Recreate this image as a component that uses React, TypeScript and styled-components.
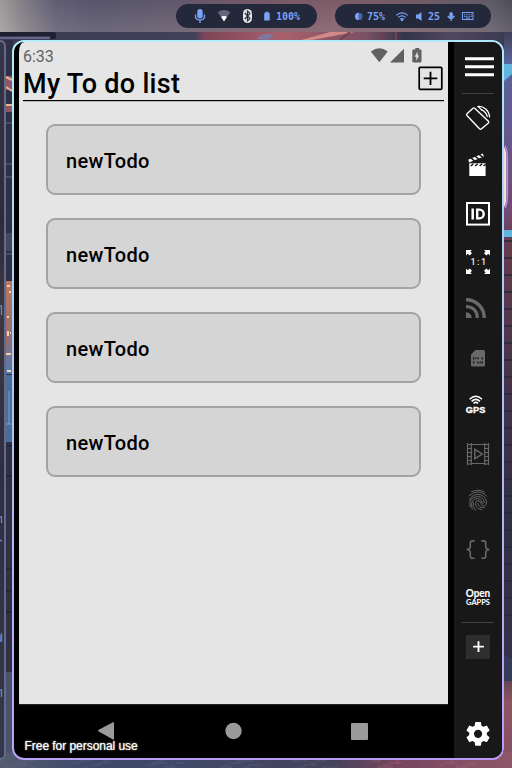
import React from "react";
import styled, { createGlobalStyle } from "styled-components";

const GlobalStyle = createGlobalStyle`
  * { box-sizing: border-box; }
  html, body { margin: 0; padding: 0; overflow: hidden; }
`;

const Desktop = styled.div`
  position: relative;
  display: flex;
  flex-direction: column;
  width: 512px;
  height: 768px;
  overflow: hidden;
  background: #35364c;
  font-family: Roboto, "Liberation Sans", sans-serif;
`;

const WallpaperArt = styled.svg`
  position: absolute;
  inset: 0;
`;

const TopBar = styled.header`
  position: relative;
  display: flex;
  justify-content: flex-end;
  gap: 18px;
  height: 32px;
  padding: 4px 21px 4px 0;
  background: linear-gradient(90deg, #aaa5a3 0, #8d898e 20px, #67647a 55px, #5c5a70 90px, #655d70 170px, #795c6b 240px, #86606c 330px, #77606a 420px, #64606b 490px, #53515f 512px);
  &::after {
    content: "";
    position: absolute;
    inset: 0;
    background: linear-gradient(180deg, rgba(20, 20, 40, 0.08), rgba(190, 180, 180, 0.16));
  }
`;

const Pill = styled.div<{ $width: number }>`
  position: relative;
  z-index: 1;
  display: flex;
  width: ${(p) => p.$width}px;
  height: 24px;
  border-radius: 12px;
  background: #24283b;
`;

const PillArt = styled.svg`
  display: block;
  text {
    font-family: "DejaVu Sans Mono", monospace;
    font-size: 10px;
    font-weight: 700;
    fill: #7aa2f7;
  }
`;

const Workspace = styled.main`
  position: relative;
  display: flex;
  gap: 6px;
  height: 736px;
  padding: 8px 8px 8px 0;
`;

const NeighbourWindow = styled.div`
  width: 6px;
  height: 720px;
  border: 2px solid #626b8c;
  border-left: 0;
  border-radius: 0 10px 10px 0;
  background: linear-gradient(#36364a, #2b2b3c 25%, #403841 38%, #2d2e41 60%, #36374a);
  overflow: hidden;
`;

const NeighbourText = styled.svg`
  display: block;
`;

const WindowFrame = styled.section`
  width: 492px;
  height: 720px;
  padding: 2px;
  border-radius: 12px;
  background: linear-gradient(172deg, #b4f0fb 0%, #a9d4f5 30%, #b2b9f5 62%, #bb9af7 100%);
`;

const WindowBody = styled.div`
  position: relative;
  display: flex;
  width: 488px;
  height: 716px;
  padding-left: 5px;
  border-radius: 10px;
  overflow: hidden;
  background: #000;
`;

const Phone = styled.div`
  display: flex;
  flex-direction: column;
  width: 429px;
  margin-right: 6px;
`;

const Screen = styled.div`
  display: flex;
  flex-direction: column;
  height: 662px;
  margin-left: -5px;
  border-left: 5px solid #000;
  border-top-left-radius: 10px;
  background: #e5e5e5;
`;

const StatusBar = styled.div`
  display: flex;
  justify-content: space-between;
  height: 24px;
  padding: 5px 25px 0 4px;
  color: #616161;
  font-size: 16px;
  line-height: 19px;
`;

const Header = styled.div`
  display: flex;
  justify-content: space-between;
  height: 35px;
  margin: 0 4px;
  border-bottom: 1px solid #000;
  box-shadow: 0 1px 0 #b5b5b5;
`;

const Title = styled.h1`
  margin: 0;
  color: #000;
  font-size: 27px;
  font-weight: 500;
  letter-spacing: 0.29px;
  line-height: 36px;
  white-space: nowrap;
`;

const AddButton = styled.button`
  width: 26px;
  height: 26px;
  padding: 0;
  border: 0;
  background: none;
  svg { display: block; }
`;

const TodoList = styled.ul`
  display: flex;
  flex-direction: column;
  gap: 23px;
  margin: 0;
  padding: 23px 27px 0;
  list-style: none;
`;

const TodoCard = styled.li`
  display: flex;
  align-items: center;
  height: 71px;
  padding: 2px 0 0 18px;
  border: 2px solid #a3a3a3;
  border-radius: 9px;
  background: #d5d5d5;
  color: #000;
  font-size: 20px;
  font-weight: 500;
  letter-spacing: 0.32px;
`;

const NavBar = styled.div`
  height: 54px;
  border-top: 1px solid #222;
  svg { display: block; }
`;

const Watermark = styled.div`
  position: absolute;
  left: 10.5px;
  bottom: 5px;
  color: #fff;
  font-family: "Liberation Sans", sans-serif;
  font-size: 12px;
  letter-spacing: -0.04px;
  line-height: 14px;
  text-shadow: 0 0 2px rgba(255, 255, 255, 0.55), 0 0 1px rgba(255, 255, 255, 0.5);
  white-space: nowrap;
`;

const Sidebar = styled.aside`
  display: flex;
  flex-direction: column;
  width: 48px;
  height: 716px;
  background: #181818;
`;

const Divider = styled.div`
  height: 1px;
  margin: 0 8px;
  background: #424242;
`;

const Spacer = styled.div`
  flex: 1;
`;

const ToolButton = styled.button<{ $color?: string; $height?: number }>`
  width: 48px;
  height: ${(p) => p.$height ?? 48}px;
  padding: 0;
  border: 0;
  background: none;
  color: ${(p) => p.$color ?? "#fff"};
  svg { display: block; }
`;

const Glyph = ({ children, h = 48 }: { children: React.ReactNode; h?: number }) => (
  <svg width="48" height={h} viewBox={`0 0 48 ${h}`} fill="none" stroke="none">
    {children}
  </svg>
);

const DIM = "#696969";

const tools: { name: string; color?: string; art: React.ReactNode }[] = [
  {
    name: "Rotate",
    art: (
      <g stroke="currentColor" strokeWidth="1.4" fill="none" strokeLinejoin="round">
        <path d="M13 19.8 19 14.3Q20 13.4 21 14.4L34.4 27.2Q35.2 28.1 34.4 29L27.3 35Q26.4 35.7 25.5 34.8L12.9 21.5Q12.1 20.6 13 19.8Z" />
        <path d="M23.3 12.6C29.5 11.6 35.3 16.5 35.6 23.4M27.2 15.6C30.2 16.8 32.6 19.6 33.4 22.9" strokeWidth="1.3" />
        <path d="M24.2 12.6 28.4 16.6" strokeWidth="1.3" />
      </g>
    ),
  },
  {
    name: "Record",
    art: (
      <g>
        <path d="M15.3 21.2H31.6V34H15.3Z" fill="currentColor" />
        <path d="M14.2 17.8 28.8 11.6 29.8 14.4 15.2 20.6Z" fill="currentColor" />
        <path d="M17.2 16.2 20.5 18.9M21.3 14.4 24.8 17M25.4 12.6 28.7 15.2" stroke="#181818" strokeWidth="1.5" />
        <path d="M16.8 24 19.4 21.8M21.2 24 23.8 21.8M25.6 24 28.2 21.8M29.6 24 31.6 22.3" stroke="#181818" strokeWidth="1.5" />
      </g>
    ),
  },
  {
    name: "Identifiers",
    art: (
      <g>
        <rect x="13" y="13" width="22" height="21.6" stroke="currentColor" strokeWidth="2" />
        <path d="M18.7 18.4V29.6" stroke="currentColor" strokeWidth="2.5" />
        <path d="M23.2 19.6H25.2C31.2 19.6 31.2 28.4 25.2 28.4H23.2Z" stroke="currentColor" strokeWidth="2.4" />
      </g>
    ),
  },
  {
    name: "Pixel perfect",
    art: (
      <g fill="currentColor">
        <path d="M12 12H18L16.4 13.6 18 15.3 15.7 17.6 13.7 15.8 12 17.5Z" />
        <path d="M36 12H30L31.6 13.6 30 15.3 32.3 17.6 34.3 15.8 36 17.5Z" />
        <path d="M12 36H18L16.4 34.4 18 32.7 15.7 30.4 13.7 32.2 12 30.5Z" />
        <path d="M36 36H30L31.6 34.4 30 32.7 32.3 30.4 34.3 32.2 36 30.5Z" />
        <text x="24.3" y="27" fontSize="9" fontFamily="Roboto" fontWeight="500" textAnchor="middle" textLength="15.5" opacity=".9">1 : 1</text>
      </g>
    ),
  },
  {
    name: "Network",
    color: DIM,
    art: (
      <g>
        <path d="M12 13.7C22.5 13.7 30.2 21.5 30.2 32" stroke="currentColor" strokeWidth="3.5" />
        <path d="M12 20.6C19 20.6 23.3 25 23.3 32" stroke="currentColor" strokeWidth="3.3" />
        <path d="M12 26.3Q17.5 27 17.8 32H12Z" fill="currentColor" />
      </g>
    ),
  },
  {
    name: "SIM",
    color: DIM,
    art: (
      <g>
        <path d="M21.5 16H29.5Q31 16 31 17.5V31Q31 32.5 29.5 32.5H18.5Q17 32.5 17 31V20.5Z" fill="currentColor" />
        <path d="M19.7 23.3V25.5M24 23.3V25.2M28.3 23.3V25.5M19.7 27.3V29.6M24 27.5V29.6M28.3 27.3V29.6M21 24.2H22.5M25.5 28.5H27" stroke="#181818" strokeWidth="1.3" />
      </g>
    ),
  },
  {
    name: "GPS",
    art: (
      <g>
        <path d="M15.6 17.2Q21.8 11.4 28 17.2M17.6 19.4Q21.8 15.4 26 19.4M19.5 21.4Q21.8 19.4 24.1 21.4" stroke="currentColor" strokeWidth="1.5" />
        <text x="11.8" y="31" fontSize="9.6" fontFamily="Liberation Sans" fontWeight="700" fill="currentColor" stroke="currentColor" strokeWidth=".35" textLength="19.5" lengthAdjust="spacingAndGlyphs">GPS</text>
      </g>
    ),
  },
  {
    name: "Capture",
    color: DIM,
    art: (
      <g stroke="currentColor" strokeWidth="1.2">
        <path d="M13.5 13V35M17.3 13V35M30.7 13V35M34.5 13V35M17.3 14.5H30.7M17.3 33.5H30.7" />
        <path d="M13 14.5H17M13 18.5H17M13 22.5H17M13 26.5H17M13 30.5H17M13 34H17M31 14.5H35M31 18.5H35M31 22.5H35M31 26.5H35M31 30.5H35M31 34H35" />
        <path d="M20.8 19.3V28.7L28.3 24Z" strokeWidth="1.4" />
      </g>
    ),
  },
  {
    name: "Biometrics",
    color: DIM,
    art: (
      <g stroke="currentColor" strokeWidth=".95" strokeLinecap="round">
        <g transform="translate(0 1)">
          <path d="M17.5 12.8Q24 9.5 30.2 12.8M15.2 16.7Q19.5 12.9 24 13 29.5 13.2 32.7 17.2M15.2 21.2Q18.5 15.2 24 15.4 31 15.7 32.5 22.9 32.6 26.3 30.6 27 28 27.5 27.3 24.7 26.5 21.7 24 21.8 21.2 22 21.5 25 22.3 29.8 27.3 30.6" />
          <path d="M16 27.7Q14.3 17.8 23.8 17.6 29.2 17.6 30.3 23.6M18.2 30.2Q16 22.6 20.4 20.3 27 18 28.6 24.3M21.3 31.3Q18.3 27.5 19.2 23.8M24 24.4Q24.8 29.2 30.2 28.8" />
        </g>
      </g>
    ),
  },
  {
    name: "Developer",
    color: DIM,
    art: (
      <g stroke="currentColor" strokeWidth="1.6">
        <path d="M20.6 14.9H18.5Q16.3 14.9 16.3 17V20.5Q16.3 23.2 12.6 23.5 16.3 23.8 16.3 26.6V30.2Q16.3 32.2 18.5 32.2H20.6" />
        <path d="M27.4 14.9H29.5Q31.7 14.9 31.7 17V20.5Q31.7 23.2 35.4 23.5 31.7 23.8 31.7 26.6V30.2Q31.7 32.2 29.5 32.2H27.4" />
      </g>
    ),
  },
  {
    name: "Open GApps",
    art: (
      <g fill="currentColor" stroke="currentColor" fontFamily="Lato">
        <text x="11.7" y="22.6" fontSize="10.4" fontWeight="700" strokeWidth=".15" textLength="24.5" lengthAdjust="spacingAndGlyphs">Open</text>
        <text x="12" y="31.4" fontSize="7.2" fontWeight="700" strokeWidth=".05" textLength="24" lengthAdjust="spacingAndGlyphs">GAPPS</text>
      </g>
    ),
  },
];

const Wallpaper = () => (
  <WallpaperArt width="512" height="768" viewBox="0 0 512 768">
    <defs>
      <linearGradient id="sky" x1="0" x2="1" y1="0" y2="0">
        <stop offset="0" stopColor="#393a50" />
        <stop offset=".38" stopColor="#42415a" />
        <stop offset=".4" stopColor="#7e4558" />
        <stop offset=".55" stopColor="#a8616b" />
        <stop offset=".72" stopColor="#784f62" />
        <stop offset=".79" stopColor="#343449" />
        <stop offset=".88" stopColor="#514760" />
        <stop offset="1" stopColor="#393850" />
      </linearGradient>
      <linearGradient id="ground" x1="0" x2="1" y1="0" y2="0">
        <stop offset="0" stopColor="#555c72" />
        <stop offset=".18" stopColor="#3e4868" />
        <stop offset=".4" stopColor="#414967" />
        <stop offset=".65" stopColor="#45435b" />
        <stop offset=".77" stopColor="#75455e" />
        <stop offset="1" stopColor="#8e5869" />
      </linearGradient>
      <linearGradient id="right" x1="0" x2="0" y1="0" y2="1">
        <stop offset="0" stopColor="#403e56" />
        <stop offset=".04" stopColor="#57639a" />
        <stop offset=".12" stopColor="#645b91" />
        <stop offset=".25" stopColor="#704970" />
        <stop offset=".29" stopColor="#653b4d" />
        <stop offset=".5" stopColor="#41334a" />
        <stop offset=".66" stopColor="#302f43" />
        <stop offset=".85" stopColor="#353247" />
        <stop offset=".91" stopColor="#8d5563" />
        <stop offset="1" stopColor="#805063" />
      </linearGradient>
      <linearGradient id="sign" x1="0" x2="0" y1="0" y2="1">
        <stop offset="0" stopColor="#b87961" />
        <stop offset=".6" stopColor="#966e73" />
        <stop offset="1" stopColor="#547baf" />
      </linearGradient>
    </defs>
    <rect y="32" width="512" height="20" fill="url(#sky)" />
    <path d="M0 32H55V36H0ZM52 33H56V39H48Z" fill="#202033" />
    <path d="M0 37H50V39H0Z" fill="#66678e" />
    <path d="M301 40 330 32H355L312 40Z" fill="#d08a87" />
    <path d="M256 39Q264 31 274 35L268 40Z" fill="#81789f" />
    <path d="M340 40 350 32 M382 33V40 M396 32V40" stroke="#714054" strokeWidth="2" />
    <rect x="504" y="32" width="8" height="736" fill="url(#right)" />
    <path d="M504 64H512V74L504 81ZM504 230H512V237H504Z" fill="#62b5df" />
    <path d="M504 147Q506.4 150 506.4 158V196Q506.4 204 504 207Z" fill="#f4dfd8" />
    <path d="M505 146Q507.4 150 507.4 160V194Q507.4 204 505 208" stroke="#bd83e5" strokeWidth="1.5" fill="none" />
    {Array.from({ length: 23 }, (_, i) => (
      <path key={i} d={`M504 ${241 + i * 17}H512`} stroke="#29283a" strokeWidth="1.5" />
    ))}
    <path d="M504 655 512 658V681H504Z" fill="#343c58" />
    <rect x="4" y="40" width="9" height="728" fill="#303044" />
    <path d="M6 76H13V90H6ZM6 104H13V112H6Z" fill="#8c5768" />
    <path d="M6 77 12 80M6 87 12 91M6 105H12" stroke="#ebb58b" strokeWidth="2" />
    <path d="M6 123H12M6 164H12M6 177H12M6 254H12" stroke="#484c66" strokeWidth="2" />
    <path d="M6 233H12V251H6Z" fill="#45475c" />
    <rect x="6" y="281" width="7" height="93" fill="url(#sign)" />
    <path d="M7 286H10M9 292H11M7 317H9M8 331V336M10 333H11M6 354H11M7 371H11" stroke="#f4d3ab" strokeWidth="2" />
    <path d="M6 375H13V442H6Z" fill="#4b6d98" />
    <path d="M9 391V424M6 424H12" stroke="#79a2cb" />
    <path d="M6 446H12M6 476H12M6 569H12M6 591H12M6 612H12" stroke="#20263c" strokeWidth="2" />
    <rect x="6" y="672" width="7" height="96" fill="#495269" />
    <rect y="752" width="512" height="16" fill="url(#ground)" />
    {Array.from({ length: 42 }, (_, i) => (
      <path
        key={i}
        d={`M${(i * 73) % 505} ${761 + (i % 4) * 2}h${4 + (i % 5) * 3}`}
        stroke={(i * 73) % 505 > 370 ? "#aa6977" : "#626887"}
        opacity=".5"
      />
    ))}
  </WallpaperArt>
);

const todos = ["newTodo", "newTodo", "newTodo", "newTodo"];

export default function App() {
  return (
    <>
      <GlobalStyle />
      <Desktop>
        <Wallpaper />
        <TopBar>
          <Pill $width={141}>
            <PillArt width="141" height="24" fill="none">
              <rect x="21.3" y="5" width="5.4" height="9.5" rx="2.7" fill="#7aa2f7" />
              <path d="M19.5 10.5V12Q19.5 16 24 16T28.5 12V10.5M24 16V19" stroke="#7aa2f7" strokeWidth="1.3" />
              <path d="M41.7 8.3Q48 3.8 54.3 8.3L48 17.3Z" fill="#62677a" />
              <path d="M45 12.7Q48 11.3 51 12.7L48 17.5Z" fill="#fff" />
              <rect x="67" y="5" width="9" height="14" rx="4.5" fill="#e2e3e6" />
              <path d="M68.8 9 74 14.5 71.5 17V7L74 9.5 68.8 15" stroke="#24283b" strokeWidth="1.1" />
              <path d="M88.2 9.3Q88.2 8.8 88.8 8.8H89.5V7.8H92.3V8.8H93Q93.7 8.8 93.7 9.3V16.5H88.2Z" fill="#7aa2f7" />
              <text x="100" y="16">100%</text>
            </PillArt>
          </Pill>
          <Pill $width={156}>
            <PillArt width="156" height="24" fill="none">
              <circle cx="24" cy="12.4" r="3.6" fill="#4a629f" />
              <path d="M23.7 8.7A3.7 3.7 0 0 0 23.7 16.1Z" fill="#7aa2f7" />
              <text x="32" y="16">75%</text>
              <path d="M61.2 11.4Q67 6.3 72.8 11.4M63.2 13.4Q67 10.4 70.8 13.4M65 15.2Q67 13.8 69 15.2" stroke="#7aa2f7" strokeWidth="1.2" />
              <circle cx="67" cy="16" r="1.2" fill="#7aa2f7" />
              <path d="M81 10.5H83.2L86.5 8V17L83.2 14.5H81Z" fill="#7aa2f7" />
              <text x="93" y="16">25</text>
              <rect x="114.4" y="8" width="3.4" height="6" rx="1.7" fill="#7aa2f7" />
              <path d="M113.2 11.7V12.5Q116.1 16.5 119 12.5V11.7M116.1 14V17" stroke="#7aa2f7" strokeWidth="1.4" />
              <rect x="127.5" y="8.5" width="10.5" height="7" stroke="#7aa2f7" />
              <path d="M129 10.7H137M129 12.4H137" stroke="#7aa2f7" strokeDasharray="1 .8" />
              <path d="M130.5 14.1H135" stroke="#7aa2f7" />
            </PillArt>
          </Pill>
        </TopBar>
        <Workspace>
          <NeighbourWindow>
            <NeighbourText width="4" height="716">
              <path d="M0 264H1.5V273M0 475H1.5V481M0 498.5H2M0 593V599H1.5V591M0 648H1.5V655" stroke="#6286ca" strokeWidth="1.3" fill="none" />
            </NeighbourText>
          </NeighbourWindow>
          <WindowFrame>
            <WindowBody>
              <Phone>
                <Screen>
                  <StatusBar>
                    <span>6:33</span>
                    <svg width="53" height="19" viewBox="0 0 53 19" fill="#616161">
                      <path d="M.8 4.6Q9.3-2.2 17.8 4.6L9.3 15.2Z" />
                      <path d="M20 15.5 34 1.7V15.5Z" />
                      <path d="M43.2 2.5H45.3V1H49.3V2.5H50.2Q51.5 2.5 51.5 3.8V14.3Q51.5 15.6 50.2 15.6H43.7Q42.3 15.6 42.3 14.3V3.8Q42.3 2.5 43.2 2.5Z" />
                      <path d="M47.6 4.6 44.6 9.8H46.3V13.5L49.2 8.4H47.6Z" fill="#e5e5e5" />
                    </svg>
                  </StatusBar>
                  <Header>
                    <Title>My To do list</Title>
                    <AddButton aria-label="Add todo">
                      <svg width="26" height="26" viewBox="0 0 26 26" fill="none" stroke="#000">
                        <rect x="1.2" y="1.3" width="22.6" height="22" rx="1" strokeWidth="1.7" />
                        <path d="M12.5 5.7V19M5.7 12.4H19.3" strokeWidth="1.8" />
                      </svg>
                    </AddButton>
                  </Header>
                  <TodoList>
                    {todos.map((todo, i) => (
                      <TodoCard key={i}>{todo}</TodoCard>
                    ))}
                  </TodoList>
                </Screen>
                <NavBar>
                  <svg width="429" height="53" viewBox="0 0 429 53" fill="#9a9a9a">
                    <path d="M79.3 26.2Q78.3 25.7 79.3 25.1L94 17.2Q95 16.8 95 18V34Q95 35 94 34.5Z" />
                    <circle cx="214.5" cy="26" r="8.2" />
                    <rect x="332" y="18" width="17" height="17" rx="1" />
                  </svg>
                </NavBar>
              </Phone>
              <Sidebar>
                <ToolButton $height={51} aria-label="Menu">
                  <Glyph h={51}>
                    <path d="M11 16.8H40M11 24.8H40M11 32.8H40" stroke="#fff" strokeWidth="3.1" />
                  </Glyph>
                </ToolButton>
                <Divider />
                {tools.map((tool) => (
                  <ToolButton key={tool.name} $color={tool.color} aria-label={tool.name}>
                    <Glyph>{tool.art}</Glyph>
                  </ToolButton>
                ))}
                <Divider />
                <ToolButton aria-label="More">
                  <Glyph>
                    <rect x="12" y="12" width="24" height="24" fill="#2e2e2e" />
                    <path d="M24.5 18.3V29M19.1 23.6H29.9" stroke="#fff" strokeWidth="1.9" />
                  </Glyph>
                </ToolButton>
                <Spacer />
                <ToolButton aria-label="Settings">
                  <Glyph>
                    <g transform="translate(9.9 9.7) scale(1.18)">
                      <path
                        fill="#fff"
                        d="M19.43 12.98c.04-.32.07-.64.07-.98s-.03-.66-.07-.98l2.11-1.65c.19-.15.24-.42.12-.64l-2-3.46c-.12-.22-.39-.3-.61-.22l-2.49 1c-.52-.4-1.08-.73-1.69-.98l-.38-2.65C14.46 2.18 14.25 2 14 2h-4c-.25 0-.46.18-.49.42l-.38 2.65c-.61.25-1.17.59-1.69.98l-2.49-1c-.23-.09-.49 0-.61.22l-2 3.46c-.13.22-.07.49.12.64l2.11 1.65c-.04.32-.07.65-.07.98s.03.66.07.98l-2.11 1.65c-.19.15-.24.42-.12.64l2 3.46c.12.22.39.3.61.22l2.49-1c.52.4 1.08.73 1.69.98l.38 2.65c.03.24.24.42.49.42h4c.25 0 .46-.18.49-.42l.38-2.65c.61-.25 1.17-.59 1.69-.98l2.49 1c.23.09.49 0 .61-.22l2-3.46c.12-.22.07-.49-.12-.64zM12 15.5A3.5 3.5 0 1 1 12 8.5a3.5 3.5 0 0 1 0 7z"
                      />
                    </g>
                  </Glyph>
                </ToolButton>
              </Sidebar>
              <Watermark>Free for personal use</Watermark>
            </WindowBody>
          </WindowFrame>
        </Workspace>
      </Desktop>
    </>
  );
}
